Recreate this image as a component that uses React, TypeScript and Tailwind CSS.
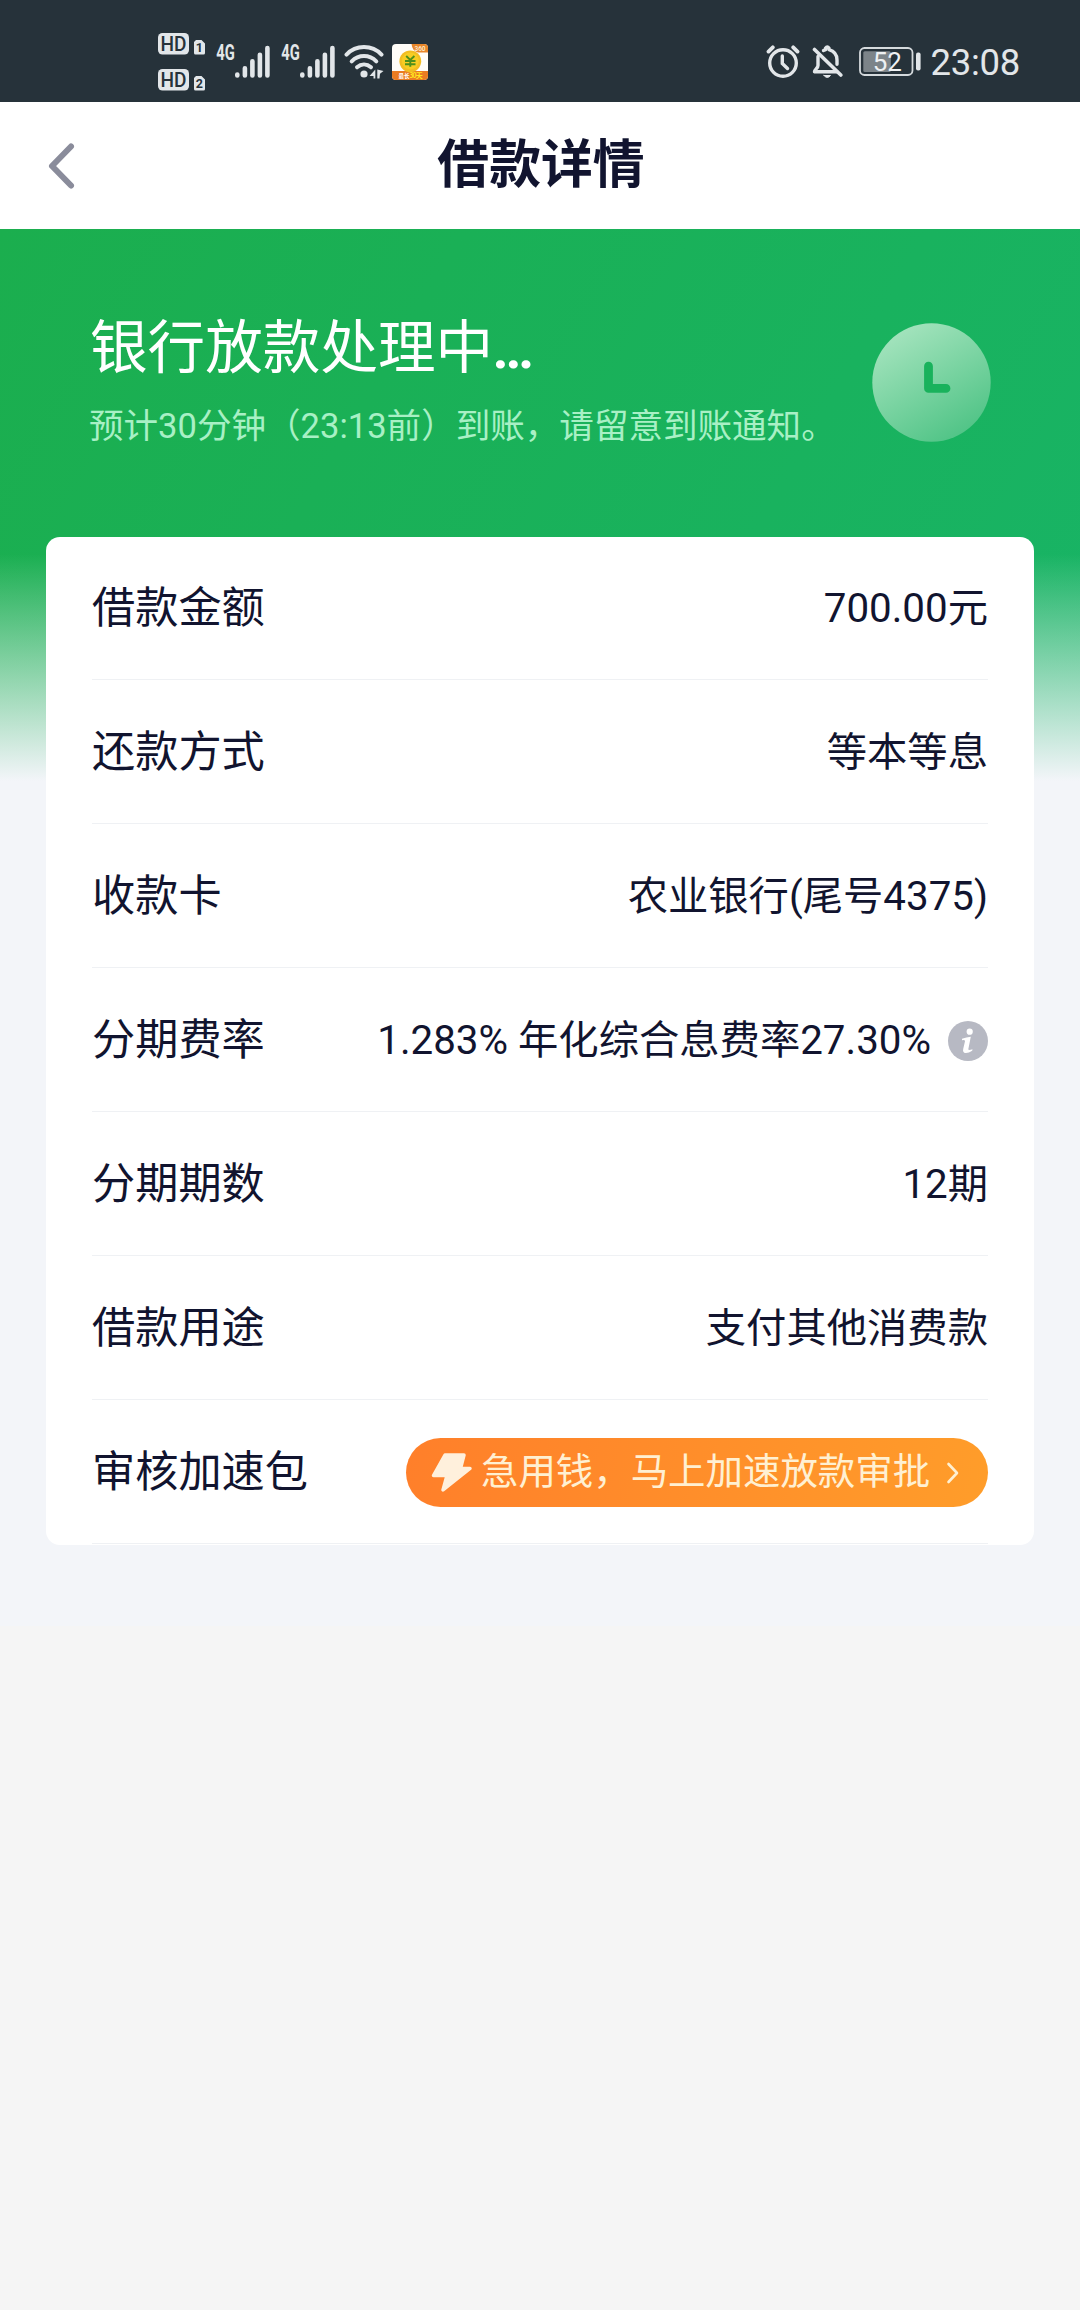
import type { ReactNode } from "react";

const FONT = "font-[Roboto,'Noto_Sans_CJK_SC',sans-serif]";

function HdBadge({ sim }: { sim: string }) {
  return (
    <div className="flex items-end gap-[5px]">
      <svg width="31" height="22" viewBox="0 0 31 22">
        <rect width="31" height="21.5" rx="4.5" fill="#e2e6e9" />
        <text x="15.5" y="17.6" textAnchor="middle" fontFamily="Roboto" fontSize="19.5" fontWeight="500" textLength="26" lengthAdjust="spacingAndGlyphs" fill="#26323a">HD</text>
      </svg>
      <svg width="11" height="16" viewBox="0 0 11 16">
        <path d="M2 1h5.5L11 4.500V14a1.500 1.500 0 0 1-1.500 1.500h-8A1.500 1.500 0 0 1 0 14V3z" fill="#e2e6e9" />
        <text x="5.300" y="12.800" textAnchor="middle" fontFamily="Roboto" fontSize="12.500" fontWeight="700" fill="#26323a">{sim}</text>
      </svg>
    </div>
  );
}

function Signal() {
  return (
    <svg className="-mt-[8px]" width="55" height="44" viewBox="0 -8 55 44">
      <text x="0.300" y="16.300" fontFamily="Roboto" fontSize="21.500" fontWeight="700" textLength="18.500" lengthAdjust="spacingAndGlyphs" fill="#e2e6e9">4G</text>
      <g stroke="#e2e6e9" strokeWidth="4.600" strokeLinecap="round">
        <path d="M21.300 30.500v.9M28.900 24.300v7.100M36.400 17.300v14.100M43.900 10.800v20.600M51.400 4v27.400" />
      </g>
    </svg>
  );
}

function Wifi() {
  return (
    <svg width="41" height="36" viewBox="0 0 41 36">
      <g fill="none" stroke="#e2e6e9" strokeWidth="4" strokeLinecap="round">
        <path d="M2.500 10.600C12 0.600 28 0.600 37.500 10.600" />
        <path d="M7.700 17.300c7-7 17.600-7 24.600 0" />
        <path d="M13 23.300c4.200-3.700 9.800-3.700 14 0" />
      </g>
      <circle cx="20" cy="30" r="3.600" fill="#e2e6e9" />
      <path d="M31.300 25.500v9h-1.800V32H25.500zM33.300 25.500l6.200 1.500-3.500 2.700-.5 4.800h-2.200z" fill="#e2e6e9" />
    </svg>
  );
}

function AppIcon() {
  return (
    <svg width="36" height="36" viewBox="0 0 36 36">
      <defs>
        <clipPath id="appClip"><rect width="36" height="36" rx="4" /></clipPath>
      </defs>
      <g clipPath="url(#appClip)">
        <rect width="36" height="36" fill="#fffdf8" />
        <path d="M19.500 0h16.500v8.500h-10q-5.500-1-6.500-8.500z" fill="#e8862a" />
        <text x="28" y="7" textAnchor="middle" fontFamily="Roboto" fontSize="6.500" fontWeight="500" fill="#fff0d8">360</text>
        <rect y="27" width="36" height="9" fill="#ea7c22" />
        <circle cx="18.300" cy="17.300" r="10.900" fill="#f2bd22" />
        <circle cx="18.300" cy="17" r="8.500" fill="#f7cd24" />
        <path d="M14.200 12l4.100 4 4.100-4M13 17h10.500M13 20.300h10.500M18.300 16v6.800" stroke="#4d8f1c" strokeWidth="1.900" fill="none" />
        <text x="6.500" y="34.300" fontFamily="Noto Sans CJK SC" fontSize="5.500" fontWeight="700" fill="#fff">最长</text>
        <text x="17.200" y="34.300" fontFamily="Noto Sans CJK SC" fontSize="7" fontWeight="700" fill="#ffe81f" textLength="13.500">30天</text>
      </g>
    </svg>
  );
}

function Alarm() {
  return (
    <svg width="34" height="36" viewBox="0 0 34 36" fill="none" stroke="#e2e6e9" strokeLinecap="round">
      <circle cx="17" cy="19" r="13.300" strokeWidth="3.400" />
      <path d="M2.500 7.600l4.300-4.300M31.500 7.600l-4.300-4.300" strokeWidth="3.800" />
      <path d="M16.300 12v7.500l5.200 5" strokeWidth="3.400" />
    </svg>
  );
}

function BellOff() {
  return (
    <svg width="32" height="36" viewBox="0 0 32 36" fill="none" stroke="#e2e6e9" strokeLinecap="round" strokeLinejoin="round">
      <path d="M6 12.500v9c0 2.500-3 3.500-3.500 6.300H25" strokeWidth="3.400" />
      <path d="M11.500 6.500l2-.8V4.300q1.800-2.500 3.500 0v1.400c5 1.500 8 5.300 8 10.300v4.200" strokeWidth="3.400" />
      <path d="M2.500 5.500L28.800 31" strokeWidth="3.600" />
      <path d="M12 31.500h6.500q-3.200 4-6.500 0z" fill="#e2e6e9" strokeWidth="1" />
    </svg>
  );
}

function Battery() {
  return (
    <svg width="63" height="30" viewBox="0 0 63 30">
      <rect x="1" y="1" width="52.500" height="27" rx="4.500" fill="none" stroke="#d5dadd" strokeWidth="1.800" />
      <rect x="4.300" y="4.200" width="27.500" height="20.800" rx="1.500" fill="#7c8489" />
      <text x="28.300" y="23.800" textAnchor="middle" fontFamily="Roboto" fontSize="26" fill="#eef1f3">52</text>
      <rect x="57" y="5.500" width="4.600" height="18" rx="2" fill="#e2e6e9" />
    </svg>
  );
}

function StatusBar() {
  return (
    <div className="flex h-[102px] items-start justify-between bg-[#26323a] pl-[158px] pr-[60px]">
      <div className="flex pt-[33px]">
        <div className="flex flex-col gap-[14px]">
          <HdBadge sim="1" />
          <HdBadge sim="2" />
        </div>
        <div className="ml-[11px] flex items-start pt-[11px]">
          <Signal />
          <div className="ml-[10px]"><Signal /></div>
          <div className="ml-[8px]"><Wifi /></div>
          <div className="ml-[7px]"><AppIcon /></div>
        </div>
      </div>
      <div className="flex items-start pt-[44px]">
        <Alarm />
        <div className="ml-[12px]"><BellOff /></div>
        <div className="ml-[15px] pt-[3px]"><Battery /></div>
        <span className="ml-[9px] text-[36.500px] leading-[38px] tracking-[-0.300px] text-[#e2e6e9]">23:08</span>
      </div>
    </div>
  );
}

function Row({ label, children }: { label: string; children: ReactNode }) {
  return (
    <div className="mb-px flex h-[143px] items-center justify-between border-b border-[#eff1f4]">
      <span className="pt-[2px] text-[43.200px] leading-[60px]">{label}</span>
      <div className="flex items-center text-[40.320px] leading-[60px]">{children}</div>
    </div>
  );
}

function Value({ children }: { children: ReactNode }) {
  return <span className="pt-[2px]">{children}</span>;
}

export default function App() {
  return (
    <div className={`flex h-[2310px] w-[1080px] flex-col bg-[#f5f5f5] text-[#11142f] ${FONT}`}>
      <StatusBar />
      <header className="grid h-[127px] grid-cols-[1fr_auto_1fr] items-center bg-white px-[46px]">
        <svg width="30" height="48" viewBox="0 0 30 48" fill="none" stroke="#8a8c9b" strokeWidth="6" strokeLinecap="round" strokeLinejoin="round">
          <path d="M25 4.500L6 24 25 43.500" />
        </svg>
        <h1 className="pl-[2px] text-[51.840px] leading-[70px] font-bold">借款详情</h1>
      </header>
      <main className="h-[1397px] bg-[#f3f5f9] bg-[linear-gradient(to_bottom,rgba(243,245,249,0)_325px,#f3f5f9_552px),linear-gradient(120deg,#1bae4e_0%,#18b466_100%)] bg-[length:100%_552px] bg-no-repeat px-[46px]">
        <section className="flex h-[308px] justify-between pl-[44px] pr-[43px]">
          <div className="pt-[80px]">
            <h2 className="text-[57.600px] leading-[80px] text-white">银行放款处理中<span className="-ml-px text-[56px] font-bold">…</span></h2>
            <p className="mt-[12px] -ml-px text-[34.560px] leading-[50px] text-[#a8f0c5]">预计30分钟（23:13前）到账，请留意到账通知。</p>
          </div>
          <svg className="mt-[94px]" width="119" height="119" viewBox="0 0 119 119">
            <defs>
              <linearGradient id="clockFace" x1="0.200" y1="0" x2="0.800" y2="1">
                <stop offset="0" stopColor="#a8e5c0" />
                <stop offset="1" stopColor="#4bc283" />
              </linearGradient>
            </defs>
            <circle cx="59.500" cy="59.500" r="59.200" fill="url(#clockFace)" />
            <path d="M56.500 43.200v22.200h17.500" fill="none" stroke="#19b25c" strokeWidth="8.800" strokeLinecap="round" strokeLinejoin="round" />
          </svg>
        </section>
        <section className="h-[1008px] rounded-[14px] bg-white px-[46px]">
          <Row label="借款金额"><Value>700.00元</Value></Row>
          <Row label="还款方式"><Value>等本等息</Value></Row>
          <Row label="收款卡"><Value>农业银行(尾号4375)</Value></Row>
          <Row label="分期费率">
            <Value>1.283% 年化综合息费率27.30%</Value>
            <svg className="mt-px ml-[17px]" width="40" height="40" viewBox="0 0 40 40">
              <circle cx="20" cy="20" r="20" fill="#b7b9c3" />
              <circle cx="21.700" cy="10.700" r="3.100" fill="#fff" />
              <path d="M14 17.700Q18.500 16.300 22.800 15.800L20.300 28.200Q20.200 29.800 24.500 28.300L24.200 29.800Q20.500 32.200 17.500 32Q14.400 31.700 15.200 28L17 20.200Q17.200 18.700 14 19.200Z" fill="#fff" />
            </svg>
          </Row>
          <Row label="分期期数"><Value>12期</Value></Row>
          <Row label="借款用途"><Value>支付其他消费款</Value></Row>
          <Row label="审核加速包">
            <div className="mt-px flex h-[69px] w-[582px] items-center rounded-full bg-[linear-gradient(100deg,#ff7f2a,#ff9d2a)] pl-[25px] text-[37.440px] text-[#fff0d2]">
              <svg width="41" height="41" viewBox="0 0 41 41">
                <path d="M14 3h19l-3.500 13.500h9.500L12 38l4-14.500H2.500z" fill="#fff0dc" stroke="#fff0dc" strokeWidth="3.500" strokeLinejoin="round" />
              </svg>
              <span className="ml-[9px] pb-[2px] leading-[60px]">急用钱，马上加速放款审批</span>
              <svg className="ml-[16px]" width="14" height="24" viewBox="0 0 14 24" fill="none" stroke="#fff0d2" strokeWidth="2.600" strokeLinecap="round" strokeLinejoin="round">
                <path d="M2.500 3l8.500 9-8.500 9" />
              </svg>
            </div>
          </Row>
        </section>
      </main>
    </div>
  );
}
